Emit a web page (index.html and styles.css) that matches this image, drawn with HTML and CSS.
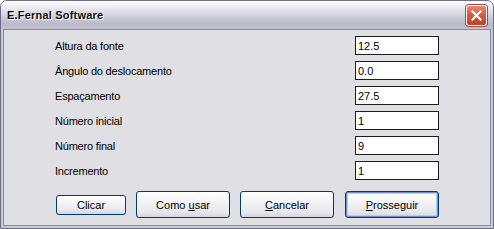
FILE: index.html
```html
<!DOCTYPE html>
<html lang="pt">
<head>
    <meta charset="UTF-8">
    <title>E.Fernal Software</title>
    <link rel="stylesheet" href="styles.css">
</head>
<body>
    <div class="window">
        <div class="titlebar">
            <span class="title">E.Fernal Software</span>
            <button class="close" aria-label="Fechar">
                <svg width="11" height="11" viewBox="0 0 11 11">
                    <path d="M1.5 1.5 L9.5 9.5 M9.5 1.5 L1.5 9.5" stroke="#fff" stroke-width="2.2" stroke-linecap="square"/>
                </svg>
            </button>
        </div>
        <div class="client">
            <div class="form">
                <label>Altura da fonte</label>
                <input type="text" value="12.5">
                <label>Ângulo do deslocamento</label>
                <input type="text" value="0.0">
                <label>Espaçamento</label>
                <input type="text" value="27.5">
                <label>Número inicial</label>
                <input type="text" value="1">
                <label>Número final</label>
                <input type="text" value="9">
                <label>Incremento</label>
                <input type="text" value="1">
            </div>
            <div class="buttons">
                <button class="btn small">Clicar</button>
                <button class="btn">Como <u>u</u>sar</button>
                <button class="btn"><u>C</u>ancelar</button>
                <button class="btn default"><u>P</u>rosseguir</button>
            </div>
        </div>
    </div>
</body>
</html>
```

FILE: styles.css
```css
body {
    margin: 0;
    background: #fff;
    font-family: "Liberation Sans", Arial, sans-serif;
}
.window {
    width: 494px;
    height: 229px;
    box-sizing: border-box;
    border: 1px solid #6c6c86;
    border-radius: 7px 7px 0 0;
    background: #c9c9d7;
    display: flex;
    flex-direction: column;
}
.titlebar {
    height: 28px;
    flex: none;
    display: flex;
    align-items: center;
    justify-content: space-between;
    padding: 0 6px 0 6px;
    border-radius: 6px 6px 0 0;
    background: linear-gradient(to bottom, #ffffff 0%, #ececf1 22%, #d3d3de 50%, #b9b9cb 82%, #c2c2d1 100%);
}
.title {
    font-weight: bold;
    font-size: 11px;
    color: #111;
    text-shadow: 1px 1px 0 #fff;
    letter-spacing: 0.2px;
}
.close {
    width: 21px;
    height: 21px;
    padding: 0;
    border: 1px solid #fff;
    border-radius: 3px;
    background: linear-gradient(to bottom, #e88a74 0%, #d35a3c 50%, #c0402a 100%);
    box-shadow: 0 0 0 1px #a34a3c;
    display: flex;
    align-items: center;
    justify-content: center;
    margin-top: 1px;
}
.client {
    flex: 1;
    margin: 0 2px 2px 2px;
    border: 1px solid #8a8aa0;
    background: #e0dfe3;
    font-size: 11px;
}
.form {
    display: grid;
    grid-template-columns: 1fr 84px;
    grid-auto-rows: 19px;
    row-gap: 6px;
    padding: 6px 51px 0 51px;
    align-items: center;
}
.form label {
    color: #000;
    letter-spacing: -0.2px;
}
.form input {
    height: 19px;
    box-sizing: border-box;
    margin: 0;
    border: 1px solid #1c1c1c;
    background: #fff;
    padding: 0 2px;
    font-family: "Liberation Sans", Arial, sans-serif;
    font-size: 11px;
    color: #000;
}
.buttons {
    display: flex;
    align-items: center;
    margin-top: 11px;
    padding-left: 52px;
    gap: 10px;
}
.btn {
    width: 94px;
    height: 27px;
    margin: 0;
    padding: 0;
    border: 1px solid #003c74;
    border-radius: 3px;
    background: linear-gradient(to bottom, #ffffff 0%, #f4f4f6 40%, #e6e6ec 80%, #d6d6de 100%);
    font-family: "Liberation Sans", Arial, sans-serif;
    font-size: 11px;
    color: #000;
}
.btn.small {
    width: 70px;
    height: 20px;
}
.btn.default {
    margin-left: 1px;
    box-shadow: inset 0 0 0 1px #6f8fc8, inset 0 0 0 2px #b8cdf0;
}
```
